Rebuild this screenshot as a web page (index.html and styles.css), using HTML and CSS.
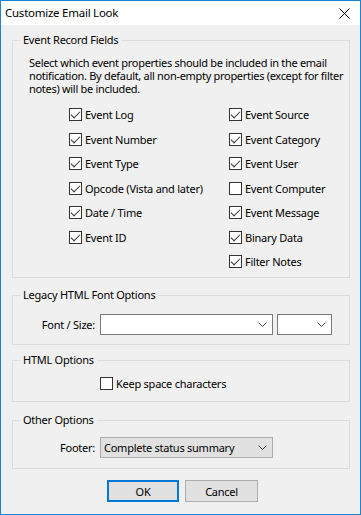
FILE: index.html
```html
<!DOCTYPE html>
<html lang="en">
<head>
  <meta charset="UTF-8" />
  <title>Customize Email Look</title>
  <link rel="stylesheet" href="styles.css">
</head>
<body>

  <div class="window">
    <div class="titlebar">
      <span class="title">Customize Email Look</span>
      <svg class="close" width="11" height="11" viewBox="0 0 11 11">
        <path d="M0.5 0.5l10 10M10.5 0.5l-10 10" stroke="#000" stroke-width="1" fill="none"/>
      </svg>
    </div>

    <div class="content">

      <fieldset class="group">
        <legend>Event Record Fields</legend>
        <p class="hint">Select which event properties should be included in the email notification. By default, all non-empty properties (except for filter notes) will be included.</p>
        <div class="columns">
          <div class="column column-left">
            <label class="option"><span class="box on"></span>Event Log</label>
            <label class="option"><span class="box on"></span>Event Number</label>
            <label class="option"><span class="box on"></span>Event Type</label>
            <label class="option"><span class="box on"></span>Opcode (Vista and later)</label>
            <label class="option"><span class="box on"></span>Date / Time</label>
            <label class="option"><span class="box on"></span>Event ID</label>
          </div>
          <div class="column">
            <label class="option"><span class="box on"></span>Event Source</label>
            <label class="option"><span class="box on"></span>Event Category</label>
            <label class="option"><span class="box on"></span>Event User</label>
            <label class="option"><span class="box"></span>Event Computer</label>
            <label class="option"><span class="box on"></span>Event Message</label>
            <label class="option"><span class="box on"></span>Binary Data</label>
            <label class="option"><span class="box on"></span>Filter Notes</label>
          </div>
        </div>
      </fieldset>

      <fieldset class="group group-font">
        <legend>Legacy HTML Font Options</legend>
        <div class="field-row">
          <span class="field-label">Font / Size:</span>
          <div class="combo combo-font">
            <span class="combo-text"></span>
            <svg class="chevron" width="9" height="5" viewBox="0 0 9 5"><path d="M0.5 0.5l4 4 4-4" stroke="#444" fill="none"/></svg>
          </div>
          <div class="combo combo-size">
            <span class="combo-text"></span>
            <svg class="chevron" width="9" height="5" viewBox="0 0 9 5"><path d="M0.5 0.5l4 4 4-4" stroke="#444" fill="none"/></svg>
          </div>
        </div>
      </fieldset>

      <fieldset class="group group-html">
        <legend>HTML Options</legend>
        <div class="single-option">
          <label class="option"><span class="box"></span>Keep space characters</label>
        </div>
      </fieldset>

      <fieldset class="group group-other">
        <legend>Other Options</legend>
        <div class="field-row">
          <span class="field-label">Footer:</span>
          <div class="combo combo-footer">
            <span class="combo-text">Complete status summary</span>
            <svg class="chevron" width="9" height="5" viewBox="0 0 9 5"><path d="M0.5 0.5l4 4 4-4" stroke="#444" fill="none"/></svg>
          </div>
        </div>
      </fieldset>

      <div class="buttons">
        <button class="btn btn-default">OK</button>
        <button class="btn">Cancel</button>
      </div>

    </div>
  </div>

</body>
</html>
```

FILE: styles.css
```css
* {
  box-sizing: border-box;
}

body {
  margin: 0;
  font-family: 'Noto Sans', sans-serif;
  font-size: 11px;
  letter-spacing: -0.25px;
  color: #000;
  background: #fff;
}

.window {
  width: 361px;
  height: 515px;
  border: 1px solid #1883d7;
  display: flex;
  flex-direction: column;
}

.titlebar {
  height: 24px;
  background: #fff;
  display: flex;
  align-items: center;
  justify-content: space-between;
  padding: 0 10px 0 4px;
}

.title {
  font-size: 11.5px;
  line-height: 16px;
}

.close {
  display: block;
  margin-top: 1px;
}

.content {
  flex: 1;
  background: #f0f0f0;
  padding: 7px 10px 0 11px;
}

.group {
  margin: 0;
  padding: 0;
  min-width: 0;
  border: 1px solid #dcdcdc;
}

.group legend {
  margin-left: 7px;
  padding: 0 3px;
  line-height: 16px;
}

.hint {
  margin: 8px 0 0 16px;
  line-height: 13px;
  letter-spacing: -0.3px;
}

.columns {
  display: flex;
  margin: 13px 0 0 56px;
  padding-bottom: 9px;
}

.column {
  display: flex;
  flex-direction: column;
  gap: 11.5px;
}

.column-left {
  width: 160px;
  flex: none;
}

.option {
  display: flex;
  align-items: center;
  height: 13px;
  line-height: 13px;
  white-space: nowrap;
}

.box {
  position: relative;
  width: 13px;
  height: 13px;
  flex: none;
  margin-right: 3px;
  border: 1px solid #333;
  background: #fff;
}

.box.on::after {
  content: '';
  position: absolute;
  left: 3px;
  top: 0px;
  width: 4px;
  height: 8px;
  border: solid #333;
  border-width: 0 1px 1px 0;
  transform: rotate(45deg);
}

.group-font {
  margin-top: 9px;
}

.field-row {
  display: flex;
  align-items: center;
  padding: 11px 0 9px;
}

.group-other .field-row {
  padding: 9px 0 10px;
}

.field-label {
  width: 82px;
  margin-right: 5px;
  text-align: right;
}

.combo {
  height: 21px;
  display: flex;
  align-items: center;
  justify-content: space-between;
  border: 1px solid #7a7a7a;
  background: #fff;
  padding: 0 5px 0 3px;
}

.combo-font {
  width: 173px;
  margin-right: 4px;
}

.combo-size {
  width: 55px;
}

.combo-footer {
  width: 173px;
  border-color: #adadad;
  background: #e1e1e1;
}

.chevron {
  display: block;
}

.group-html {
  margin-top: 7px;
}

.single-option {
  padding: 9px 0 11px 87px;
}

.group-other {
  margin-top: 10px;
}

.buttons {
  display: flex;
  gap: 6px;
  margin: 11px 0 0 95px;
}

.btn {
  width: 72px;
  height: 22px;
  padding: 0;
  font-family: 'Noto Sans', sans-serif;
  font-size: 11px;
  letter-spacing: -0.25px;
  color: #000;
  background: #e1e1e1;
  border: 1px solid #adadad;
  border-radius: 0;
}

.btn-default {
  border: 2px solid #0078d7;
}

.btn + .btn {
  width: 73px;
}
```
